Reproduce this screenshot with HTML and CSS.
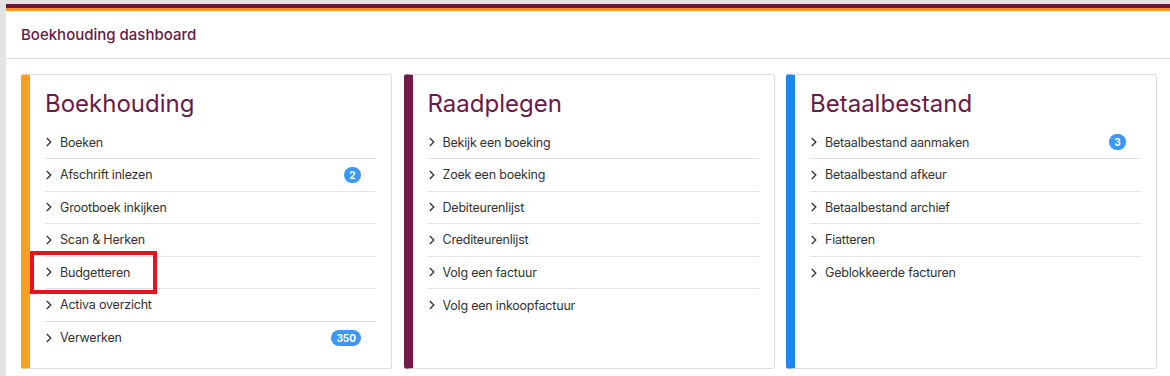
FILE: index.html
```html
<!DOCTYPE html>
<html lang="nl">
<head>
<meta charset="utf-8">
<title>Boekhouding dashboard</title>
<link rel="stylesheet" href="styles.css">
</head>
<body>
<div class="panel">
  <div class="panel-header">Boekhouding dashboard</div>
  <div class="panel-body">
    <div class="card card-orange">
      <h2 class="card-title">Boekhouding</h2>
      <ul class="menu">
        <li class="menu-item"><svg class="chev" viewBox="0 0 8 10"><path d="M1.8 1 L5.8 5 L1.8 9"/></svg><span class="label">Boeken</span></li>
        <li class="menu-item"><svg class="chev" viewBox="0 0 8 10"><path d="M1.8 1 L5.8 5 L1.8 9"/></svg><span class="label">Afschrift inlezen</span><span class="badge">2</span></li>
        <li class="menu-item"><svg class="chev" viewBox="0 0 8 10"><path d="M1.8 1 L5.8 5 L1.8 9"/></svg><span class="label">Grootboek inkijken</span></li>
        <li class="menu-item"><svg class="chev" viewBox="0 0 8 10"><path d="M1.8 1 L5.8 5 L1.8 9"/></svg><span class="label">Scan &amp; Herken</span></li>
        <li class="menu-item highlighted"><svg class="chev" viewBox="0 0 8 10"><path d="M1.8 1 L5.8 5 L1.8 9"/></svg><span class="label">Budgetteren</span><span class="mark"></span></li>
        <li class="menu-item"><svg class="chev" viewBox="0 0 8 10"><path d="M1.8 1 L5.8 5 L1.8 9"/></svg><span class="label">Activa overzicht</span></li>
        <li class="menu-item"><svg class="chev" viewBox="0 0 8 10"><path d="M1.8 1 L5.8 5 L1.8 9"/></svg><span class="label">Verwerken</span><span class="badge">350</span></li>
      </ul>
    </div>
    <div class="card card-purple">
      <h2 class="card-title">Raadplegen</h2>
      <ul class="menu">
        <li class="menu-item"><svg class="chev" viewBox="0 0 8 10"><path d="M1.8 1 L5.8 5 L1.8 9"/></svg><span class="label">Bekijk een boeking</span></li>
        <li class="menu-item"><svg class="chev" viewBox="0 0 8 10"><path d="M1.8 1 L5.8 5 L1.8 9"/></svg><span class="label">Zoek een boeking</span></li>
        <li class="menu-item"><svg class="chev" viewBox="0 0 8 10"><path d="M1.8 1 L5.8 5 L1.8 9"/></svg><span class="label">Debiteurenlijst</span></li>
        <li class="menu-item"><svg class="chev" viewBox="0 0 8 10"><path d="M1.8 1 L5.8 5 L1.8 9"/></svg><span class="label">Crediteurenlijst</span></li>
        <li class="menu-item"><svg class="chev" viewBox="0 0 8 10"><path d="M1.8 1 L5.8 5 L1.8 9"/></svg><span class="label">Volg een factuur</span></li>
        <li class="menu-item"><svg class="chev" viewBox="0 0 8 10"><path d="M1.8 1 L5.8 5 L1.8 9"/></svg><span class="label">Volg een inkoopfactuur</span></li>
      </ul>
    </div>
    <div class="card card-blue">
      <h2 class="card-title">Betaalbestand</h2>
      <ul class="menu">
        <li class="menu-item"><svg class="chev" viewBox="0 0 8 10"><path d="M1.8 1 L5.8 5 L1.8 9"/></svg><span class="label">Betaalbestand aanmaken</span><span class="badge">3</span></li>
        <li class="menu-item"><svg class="chev" viewBox="0 0 8 10"><path d="M1.8 1 L5.8 5 L1.8 9"/></svg><span class="label">Betaalbestand afkeur</span></li>
        <li class="menu-item"><svg class="chev" viewBox="0 0 8 10"><path d="M1.8 1 L5.8 5 L1.8 9"/></svg><span class="label">Betaalbestand archief</span></li>
        <li class="menu-item"><svg class="chev" viewBox="0 0 8 10"><path d="M1.8 1 L5.8 5 L1.8 9"/></svg><span class="label">Fiatteren</span></li>
        <li class="menu-item"><svg class="chev" viewBox="0 0 8 10"><path d="M1.8 1 L5.8 5 L1.8 9"/></svg><span class="label">Geblokkeerde facturen</span></li>
      </ul>
    </div>
  </div>
</div>
</body>
</html>
```

FILE: styles.css
```css
* { box-sizing: border-box; }

html, body {
  margin: 0;
  padding: 0;
}

body {
  background: #e3e3e3;
  font-family: Inter, "Noto Sans", sans-serif;
  overflow: hidden;
  width: 1170px;
  height: 376px;
  padding: 4px 0 0 6px;
}

.panel {
  width: 1166px;
  min-height: 380px;
  background: #ffffff;
  border-top: 4px solid #6a1744;
}

.panel-header {
  border-top: 3px solid #f7941d;
  border-bottom: 1px solid #dcdcdc;
  height: 51px;
  padding-left: 15px;
  display: flex;
  align-items: center;
  font-size: 15px;
  font-weight: 500;
  color: #6a1a45;
}

.panel-body {
  padding: 15px 15px;
  display: grid;
  grid-template-columns: repeat(3, 371px);
  column-gap: 11.5px;
}

.card {
  height: 295px;
  border: 1px solid #dedede;
  border-radius: 3px;
  border-left-width: 9px;
  padding: 14px 15px 0 15px;
  background: #fff;
}

.card-orange { border-left-color: #f9a023; }
.card-purple { border-left-color: #741a4b; }
.card-blue { border-left-color: #2284ee; }

.card-title {
  margin: 0;
  font-size: 24px;
  line-height: 30px;
  font-weight: 400;
  color: #6a1a45;
}

.menu {
  list-style: none;
  margin: 7.5px 0 0 0;
  padding: 0;
}

.menu-item {
  position: relative;
  display: flex;
  align-items: center;
  height: 32.5px;
  border-bottom: 1px solid #e2e2e2;
  font-size: 12.5px;
  letter-spacing: -0.2px;
  color: #333333;
}

.menu-item:last-child { border-bottom: none; }

.chev {
  width: 8px;
  height: 10px;
  margin-right: 7px;
  flex: none;
}

.chev path {
  fill: none;
  stroke: #333333;
  stroke-width: 1.3;
}

.label { flex: 1; }

.badge {
  flex: none;
  margin-right: 15px;
  min-width: 17px;
  height: 16px;
  padding: 0 5px;
  border-radius: 8px;
  background: #3a98f8;
  color: #ffffff;
  font-size: 10px;
  font-weight: 700;
  line-height: 16px;
  letter-spacing: 0;
  text-align: center;
}

.mark {
  position: absolute;
  left: -15px;
  top: -6px;
  width: 127px;
  height: 43px;
  border: 4px solid #e6141f;
}
```
